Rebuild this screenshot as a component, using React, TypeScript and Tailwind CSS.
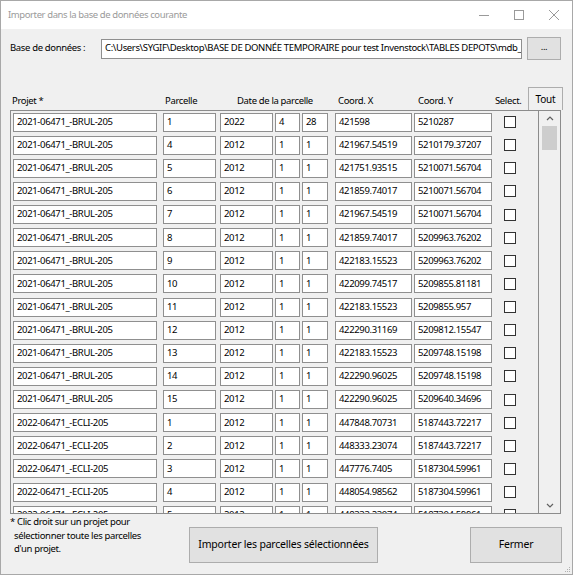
import React from "react";

type Row = { projet: string; parcelle: string; y: string; m: string; d: string; x: string; yy: string };

const B = "2021-06471_-BRUL-205";
const E = "2022-06471_-ECLI-205";

const rows: Row[] = [
  { projet: B, parcelle: "1", y: "2022", m: "4", d: "28", x: "421598", yy: "5210287" },
  { projet: B, parcelle: "4", y: "2012", m: "1", d: "1", x: "421967.54519", yy: "5210179.37207" },
  { projet: B, parcelle: "5", y: "2012", m: "1", d: "1", x: "421751.93515", yy: "5210071.56704" },
  { projet: B, parcelle: "6", y: "2012", m: "1", d: "1", x: "421859.74017", yy: "5210071.56704" },
  { projet: B, parcelle: "7", y: "2012", m: "1", d: "1", x: "421967.54519", yy: "5210071.56704" },
  { projet: B, parcelle: "8", y: "2012", m: "1", d: "1", x: "421859.74017", yy: "5209963.76202" },
  { projet: B, parcelle: "9", y: "2012", m: "1", d: "1", x: "422183.15523", yy: "5209963.76202" },
  { projet: B, parcelle: "10", y: "2012", m: "1", d: "1", x: "422099.74517", yy: "5209855.81181" },
  { projet: B, parcelle: "11", y: "2012", m: "1", d: "1", x: "422183.15523", yy: "5209855.957" },
  { projet: B, parcelle: "12", y: "2012", m: "1", d: "1", x: "422290.31169", yy: "5209812.15547" },
  { projet: B, parcelle: "13", y: "2012", m: "1", d: "1", x: "422183.15523", yy: "5209748.15198" },
  { projet: B, parcelle: "14", y: "2012", m: "1", d: "1", x: "422290.96025", yy: "5209748.15198" },
  { projet: B, parcelle: "15", y: "2012", m: "1", d: "1", x: "422290.96025", yy: "5209640.34696" },
  { projet: E, parcelle: "1", y: "2012", m: "1", d: "1", x: "447848.70731", yy: "5187443.72217" },
  { projet: E, parcelle: "2", y: "2012", m: "1", d: "1", x: "448333.23074", yy: "5187443.72217" },
  { projet: E, parcelle: "3", y: "2012", m: "1", d: "1", x: "447776.7405", yy: "5187304.59961" },
  { projet: E, parcelle: "4", y: "2012", m: "1", d: "1", x: "448054.98562", yy: "5187304.59961" },
  { projet: E, parcelle: "5", y: "2012", m: "1", d: "1", x: "448333.23074", yy: "5187304.59961" },
];

function Box({ w, children }: { w: string; children: React.ReactNode }) {
  return (
    <div className={`${w} h-[19px] shrink-0 bg-white border border-[#8f8f8f] pl-[3px] flex items-center overflow-hidden whitespace-nowrap`}>
      {children}
    </div>
  );
}

export default function App() {
  return (
    <div className="w-[573px] h-[575px] border border-[#a8a8a8] flex flex-col font-['Noto_Sans',sans-serif] text-[9.5px] tracking-[-0.35px] text-black overflow-hidden">
      {/* title bar */}
      <div className="h-[28px] bg-white flex items-center shrink-0">
        <div className="pl-[7px] flex-1 text-[#9a9a9a] tracking-[-0.4px]">Importer dans la base de données courante</div>
        <div className="flex h-full">
          <div className="w-[35px] flex items-center justify-center">
            <svg width="10" height="10" viewBox="0 0 10 10"><path d="M0 5.5h10" stroke="#9a9a9a" strokeWidth="1" /></svg>
          </div>
          <div className="w-[35px] flex items-center justify-center">
            <svg width="10" height="10" viewBox="0 0 10 10"><rect x="0.5" y="0.5" width="9" height="9" fill="none" stroke="#9a9a9a" strokeWidth="1" /></svg>
          </div>
          <div className="w-[36px] flex items-center justify-center">
            <svg width="10" height="10" viewBox="0 0 10 10"><path d="M0 0L10 10M10 0L0 10" stroke="#9a9a9a" strokeWidth="1" /></svg>
          </div>
        </div>
      </div>

      {/* body */}
      <div className="flex-1 bg-[#f0f0f0] flex flex-col pl-[9px]">
        {/* database path */}
        <div className="mt-[8px] h-[23px] flex items-center">
          <div className="w-[91px]">Base de données :</div>
          <div className="w-[421px] h-[20px] bg-white border border-[#8f8f8f] pl-[3px] flex items-center overflow-hidden whitespace-nowrap">
            C:\Users\SYGIF\Desktop\BASE DE DONNÉE TEMPORAIRE pour test Invenstock\TABLES DEPOTS\mdb_depots.mdb
          </div>
          <button className="ml-[5px] w-[34px] h-[23px] bg-[#e1e1e1] border border-[#adadad] flex items-center justify-center pb-[2px]">...</button>
        </div>

        {/* headers */}
        <div className="mt-[27px] h-[23px] flex items-end">
          <div className="w-[155px] pl-[2px] pb-[2px]">Projet *</div>
          <div className="w-[72px] pb-[2px]">Parcelle</div>
          <div className="w-[101px] pb-[2px]">Date de la parcelle</div>
          <div className="w-[80px] pb-[2px]">Coord. X</div>
          <div className="w-[77px] pb-[2px]">Coord. Y</div>
          <div className="w-[33px] pb-[2px]">Select.</div>
          <button className="w-[35px] h-[23px] bg-[#f0f0f0] border border-[#adadad] border-b-0 flex items-center justify-center text-[10px] tracking-[-0.2px]">Tout</button>
        </div>

        {/* grid panel */}
        <div className="w-[551px] h-[404px] border border-[#8c8c8c] flex">
          <div className="flex-1 overflow-hidden pt-[1.5px]">
            {rows.map((r, i) => (
              <div key={i} className="h-[23.125px] flex">
                <div className="ml-[2px]"><Box w="w-[144px]">{r.projet}</Box></div>
                <div className="ml-[6px]"><Box w="w-[53px]">{r.parcelle}</Box></div>
                <div className="ml-[4px]"><Box w="w-[53px]">{r.y}</Box></div>
                <div className="ml-[2px]"><Box w="w-[25px]">{r.m}</Box></div>
                <div className="ml-[2px]"><Box w="w-[26px]">{r.d}</Box></div>
                <div className="ml-[7px]"><Box w="w-[77px]">{r.x}</Box></div>
                <div className="ml-[2px]"><Box w="w-[78px]">{r.yy}</Box></div>
                <div className="ml-[12px] h-[19px] flex items-center">
                  <div className="w-[12px] h-[12px] bg-white border border-[#333333]" />
                </div>
              </div>
            ))}
          </div>
          {/* scrollbar */}
          <div className="w-[22px] border-l border-[#8c8c8c] bg-[#f0f0f0] flex flex-col items-center">
            <div className="h-[13px] flex items-center justify-center mt-[1px]">
              <svg width="8" height="5" viewBox="0 0 8 5"><path d="M1 4L4 1L7 4" fill="none" stroke="#606060" strokeWidth="1.2" /></svg>
            </div>
            <div className="w-[15px] h-[24px] bg-[#cdcdcd] mt-[1px]" />
            <div className="flex-1" />
            <div className="h-[13px] flex items-center justify-center mb-[1px]">
              <svg width="8" height="5" viewBox="0 0 8 5"><path d="M1 1L4 4L7 1" fill="none" stroke="#606060" strokeWidth="1.2" /></svg>
            </div>
          </div>
        </div>

        {/* bottom */}
        <div className="flex-1 flex relative">
          <div className="w-[179px] pt-[1px] leading-[13.5px]">
            <div>* Clic droit sur un projet pour</div>
            <div className="pl-[4px]">sélectionner toute les parcelles</div>
            <div className="pl-[4px]">d'un projet.</div>
          </div>
          <button className="mt-[13px] w-[189px] h-[36px] bg-[#e1e1e1] border border-[#adadad] text-[10.5px] tracking-[-0.2px]">Importer les parcelles sélectionnées</button>
          <button className="mt-[13px] ml-[92px] w-[92px] h-[36px] bg-[#e1e1e1] border border-[#adadad] text-[10.5px] tracking-[-0.2px]">Fermer</button>
          <svg className="absolute right-[1px] bottom-[1px]" width="7" height="7" viewBox="0 0 7 7">
            <rect x="5" y="1" width="1" height="1" fill="#b0b0b0" />
            <rect x="3" y="3" width="1" height="1" fill="#b0b0b0" />
            <rect x="5" y="3" width="1" height="1" fill="#b0b0b0" />
            <rect x="1" y="5" width="1" height="1" fill="#b0b0b0" />
            <rect x="3" y="5" width="1" height="1" fill="#b0b0b0" />
            <rect x="5" y="5" width="1" height="1" fill="#b0b0b0" />
          </svg>
        </div>
      </div>
    </div>
  );
}
